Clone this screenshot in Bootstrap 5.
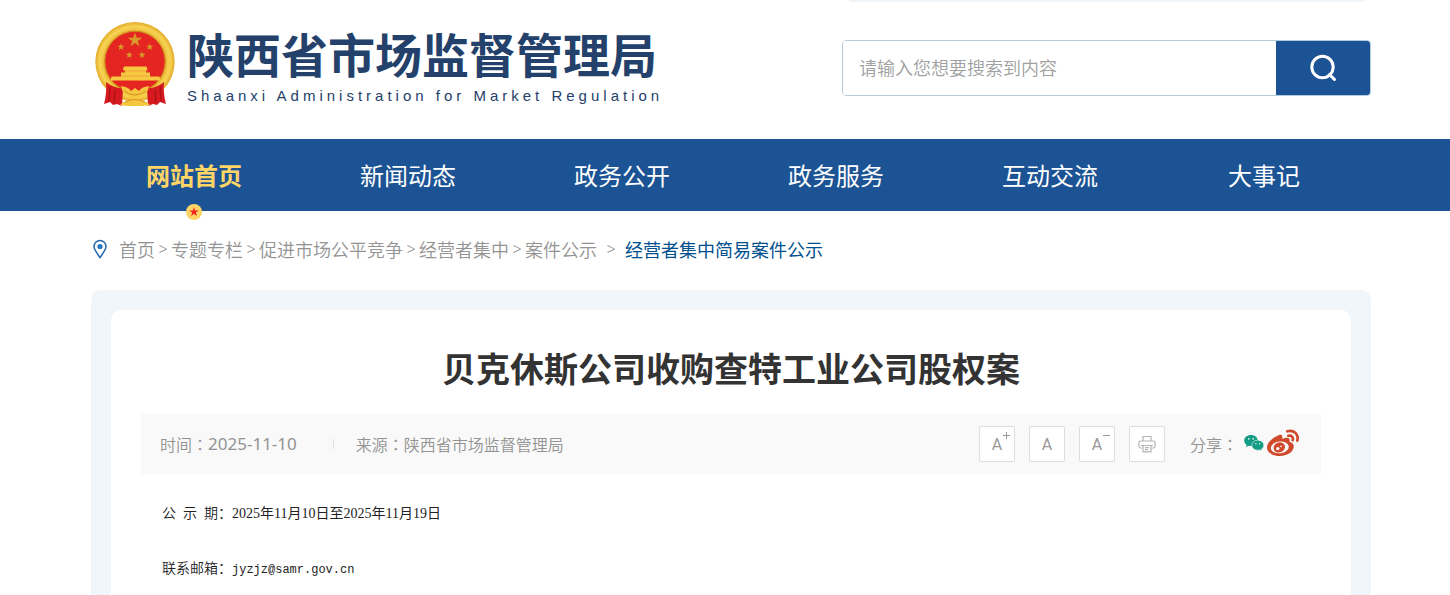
<!DOCTYPE html>
<html lang="zh-CN">
<head>
<meta charset="utf-8">
<meta name="viewport" content="width=device-width, initial-scale=1">
<title>贝克休斯公司收购查特工业公司股权案</title>
<link rel="stylesheet" href="https://cdn.jsdelivr.net/npm/bootstrap@5.3.0/dist/css/bootstrap.min.css">
<style>
  body { font-family: "Noto Sans CJK SC", sans-serif; font-weight: 350; color: #333; background: #fff; }
  a { text-decoration: none; }
  .shell { padding-left: 12px; }
  .wrap { width: 100%; max-width: 1280px; margin: 0 auto; }
  .top-strip { width: 516px; height: 2px; margin-right: 6px; background: #f0f5f9; border-radius: 0 0 8px 8px; }
  .masthead { height: 137px; padding-top: 20px; }
  .logo-cn { font-size: 47px; line-height: 46px; font-weight: 700; color: #24416b; }
  .logo-en { font-family: "Liberation Sans", sans-serif; font-weight: 400; font-size: 15px; line-height: 24px; letter-spacing: 4px; color: #24416b; }
  .search-box { width: 529px; height: 56px; margin-top: 18px; border: 1px solid #b4cbde; border-radius: 4px; overflow: hidden; }
  .search-box .form-control { border: 0; font-size: 18px; font-weight: 350; padding: 0 16px 2px; border-radius: 0; }
  .search-box .form-control::placeholder { color: #a0a0a0; }
  .search-box .btn { width: 94px; background: #1c5394; border: 0; border-radius: 0; padding: 0; }
  .main-nav { background: #1c5394; }
  .main-nav .nav { margin-left: -4px; width: calc(100% + 4px); }
  .main-nav .nav-link { font-size: 24px; line-height: 72px; padding: 0; color: #fff; font-weight: 400; }
  .main-nav .nav-link.active { color: #ffd566; font-weight: 700; }
  .nav-star { bottom: -9px; left: 50%; margin-left: -8px; }
  .crumbs { height: 79px; padding-bottom: 3px; font-size: 18px; color: #939393; }
  .crumbs a { color: #939393; }
  .crumbs a.here { color: #00508e; font-weight: 400; }
  .crumbs .sep { width: 16px; text-align: center; font-family: "Noto Sans", sans-serif; font-size: 16px; }
  .crumbs .sep.wide { width: 28px; }
  .panel { background: #f1f6fa; border-radius: 10px 10px 0 0; padding: 20px 20px 0; }
  .article { background: #fff; border-radius: 10px 10px 0 0; padding: 30px 30px 0; }
  .article h1 { font-size: 34px; line-height: 56px; font-weight: 700; margin: 0 0 18px; color: #333; }
  .meta-bar { background: #f9f9f9; min-height: 60px; padding: 0 22px 0 19px; font-size: 16px; line-height: 24px; color: #939393; }
  .meta-bar .date { font-family: "Noto Sans", sans-serif; font-size: 17px; font-weight: 400; }
  .colon { font-family: "Noto Sans CJK TC", sans-serif; }
  .rule { width: 1px; height: 10px; background: #ddd; margin: 0 22px 0 36px; }
  .tool { width: 36px; height: 36px; padding: 0; border: 1px solid #ddd; border-radius: 2px; background: #fff; margin-right: 14px; }
  .tool svg, .share-links svg, .masthead svg, .crumbs svg, .nav-star svg { display: block; }
  .tool-letter { font-family: Roboto, sans-serif; font-size: 16px; line-height: 36px; font-weight: 400; color: #999; }
  .tool-sign { top: 4px; right: 4px; }
  .share { margin-left: 11px; }
  .share-links { margin-left: 6px; padding-bottom: 2px; gap: 3px; }
  .body-text { padding: 24px 21px 0; font-family: "Liberation Serif", "Noto Sans CJK SC", serif; font-size: 14px; line-height: 28px; color: #222; font-weight: 400; }
  .body-text p { margin: 0 0 25px; }
  .body-text .cjk { font-family: "Noto Sans CJK SC", sans-serif; font-weight: 350; }
  .body-text .mono { font-family: "Liberation Mono", monospace; font-size: 12px; color: #222; }
</style>
</head>
<body class="d-flex flex-column min-vh-100">

<header>
  <div class="shell">
    <div class="wrap">
      <div class="top-strip ms-auto"></div>
      <div class="masthead d-flex justify-content-between align-items-start">
        <a href="#" class="d-flex">
          <svg class="ms-1" width="80" height="85" viewBox="4 4 80 85" aria-hidden="true">
            <defs>
              <radialGradient id="gold" cx=".5" cy=".5" r=".5"><stop offset=".75" stop-color="#e2aa28"/><stop offset=".88" stop-color="#f6cd45"/><stop offset="1" stop-color="#e3ad2f"/></radialGradient>
              <path id="star" d="M0-10 2.3-3.1 9.5-3.1 3.7 1.2 5.9 8.1 0 3.8-5.9 8.1-3.7 1.2-9.5-3.1-2.3-3.1z"/>
            </defs>
            <circle cx="44" cy="43.7" r="39.7" fill="url(#gold)"/>
            <circle cx="44" cy="43.7" r="34.5" fill="none" stroke="#f9da63" stroke-width="5" opacity=".4"/>
            <circle cx="44" cy="43.5" r="30.2" fill="#e52521" stroke="#cf8b20" stroke-width="1"/>
            <g fill="#d99a2b">
              <use href="#star" transform="translate(44 22) scale(.76)"/>
              <use href="#star" transform="translate(30 29) scale(.38)"/>
              <use href="#star" transform="translate(58.7 29) scale(.38)"/>
              <use href="#star" transform="translate(38.3 37) scale(.38)"/>
              <use href="#star" transform="translate(51 37) scale(.38)"/>
            </g>
            <path d="M33 48.500h22.500l1 3-1.500 1v2h4v4h9.500l1 4h-50l1-4H30v-4h4v-2l-2-1z" fill="#f7c943"/>
            <path d="M32 53h25M30 58h28" stroke="#e2912f" stroke-width=".6"/>
            <path d="M15 64q9 7 17 6l-1 18-5-2-4 1-3-3-6 2q3-11 2-22zM73 64q-9 7-17 6l1 18 5-2 4 1 3-3 6 2q-3-11-2-22z" fill="#d71920"/>
            <path d="M19 69l-1 14M24 72l-1 13M69 69l1 14M64 72l1 13" stroke="#a90f16" stroke-width="1.200"/>
            <path d="M30 68q8 1 10 5l4-3 4 3q2-4 10-5-1 8-8 9l-2 5 8 2 3 3-7 1H36l-7-1 3-3 8-2-2-5q-7-1-8-9z" fill="#f5c63e"/>
            <path d="M33 73q11 8 22 0M34 84q10-5 20 0" fill="none" stroke="#d39221" stroke-width="1"/>
          </svg>
          <span class="d-flex flex-column ps-2 ms-1">
            <span class="logo-cn pt-2">陕西省市场监督管理局</span>
            <span class="logo-en pt-2">Shaanxi Administration for Market Regulation</span>
          </span>
        </a>
        <form class="search-box d-flex" role="search">
          <input class="form-control shadow-none" type="text" aria-label="搜索" placeholder="请输入您想要搜索到内容">
          <button class="btn flex-shrink-0 d-flex align-items-center justify-content-center" type="button" aria-label="搜索">
            <svg width="30" height="30" viewBox="0 0 30 30" fill="none" stroke="#fff" stroke-width="3" stroke-linecap="round"><circle cx="14.500" cy="14" r="10.700"/><path d="M21.500 21.500l5 5"/></svg>
          </button>
        </form>
      </div>
    </div>
  </div>
  <nav class="main-nav">
    <div class="shell">
      <div class="wrap">
        <ul class="nav nav-fill nav-justified">
          <li class="nav-item position-relative"><a class="nav-link active" href="#">网站首页</a>
            <span class="nav-star position-absolute"><svg width="16" height="16" viewBox="-8 -8 16 16"><circle r="8" fill="#ffd566"/><use href="#star" fill="#f0281e" transform="scale(.5)"/></svg></span></li>
          <li class="nav-item"><a class="nav-link" href="#">新闻动态</a></li>
          <li class="nav-item"><a class="nav-link" href="#">政务公开</a></li>
          <li class="nav-item"><a class="nav-link" href="#">政务服务</a></li>
          <li class="nav-item"><a class="nav-link" href="#">互动交流</a></li>
          <li class="nav-item"><a class="nav-link" href="#">大事记</a></li>
        </ul>
      </div>
    </div>
  </nav>
</header>

<main class="shell flex-grow-1 d-flex flex-column">
  <nav class="wrap crumbs d-flex align-items-center" aria-label="当前位置">
    <svg class="me-2" width="20" height="20" viewBox="0 0 20 20" fill="none"><path d="M9 18.500C5.500 13.500 3 10.500 3 7.500a6 6 0 0 1 12 0c0 3-2.500 6-6 11z" stroke="#2468b0" stroke-width="1.500"/><circle cx="9" cy="7.500" r="2.600" fill="#2176c7"/></svg>
    <a href="#">首页</a><span class="sep">&gt;</span>
    <a href="#">专题专栏</a><span class="sep">&gt;</span>
    <a href="#">促进市场公平竞争</a><span class="sep">&gt;</span>
    <a href="#">经营者集中</a><span class="sep">&gt;</span>
    <a href="#">案件公示</a><span class="sep wide">&gt;</span>
    <a href="#" class="here">经营者集中简易案件公示</a>
  </nav>

  <div class="wrap panel flex-grow-1 d-flex flex-column">
    <article class="article flex-grow-1">
      <h1 class="text-center">贝克休斯公司收购查特工业公司股权案</h1>
      <div class="meta-bar d-flex align-items-center">
        <span>时间<span class="colon" lang="zh-TW">：</span></span><span class="date">2025-11-10</span>
        <span class="rule"></span>
        <span>来源<span class="colon" lang="zh-TW">：</span>陕西省市场监督管理局</span>
        <div class="d-flex align-items-center ms-auto">
          <button type="button" class="tool position-relative" aria-label="放大字号"><span class="tool-letter">A</span><svg class="tool-sign position-absolute" width="8" height="8" viewBox="0 0 8 8" stroke="#999"><path d="M1 4.500h7M4.500 1v7"/></svg></button>
          <button type="button" class="tool" aria-label="默认字号"><span class="tool-letter">A</span></button>
          <button type="button" class="tool position-relative" aria-label="缩小字号"><span class="tool-letter">A</span><svg class="tool-sign position-absolute" width="8" height="8" viewBox="0 0 8 8" stroke="#999"><path d="M1 4.500h7"/></svg></button>
          <button type="button" class="tool d-flex align-items-center justify-content-center" aria-label="打印">
            <svg width="18" height="18" viewBox="0 0 18 18" fill="none" stroke="#b5b5b5" stroke-width="1.200"><path d="M5 6V1.500h8V6M4.500 13H2.500a1.500 1.500 0 0 1-1.500-1.500v-4A1.500 1.500 0 0 1 2.500 6h13A1.500 1.500 0 0 1 17 7.500v4a1.500 1.500 0 0 1-1.500 1.500h-2"/><path d="M5 10.500h8v6.300H5zM3 10.500h12M7 12.700h4M7 14.700h3"/></svg>
          </button>
          <span class="share">分享<span class="colon" lang="zh-TW">：</span></span>
          <div class="share-links d-flex align-items-center">
            <a href="#" aria-label="微信"><svg width="20" height="18" viewBox="0 0 20 18"><path d="M7 1C3.200 1 .2 3.400.2 6.500c0 1.800.9 3.300 2.400 4.300L2 13l2.500-1.200c.8.200 1.600.3 2.500.3 3.900 0 6.800-2.400 6.800-5.500S10.900 1 7 1z" fill="#129b85"/><path d="M13.700 6.200c-3.300 0-5.900 2.200-5.900 5s2.600 5 5.900 5c.7 0 1.400-.1 2.100-.3l2.200 1.200-.6-2c1.500-.9 2.400-2.300 2.400-3.900 0-2.800-2.800-5-6.100-5z" fill="#129b85" stroke="#f9f9f9" stroke-width=".6"/><g fill="#f9f9f9"><circle cx="4.800" cy="4.900" r=".8"/><circle cx="9.200" cy="4.900" r=".8"/><circle cx="11.900" cy="9.800" r=".7"/><circle cx="15.700" cy="9.800" r=".7"/></g></svg></a>
            <a href="#" aria-label="微博"><svg width="32" height="28" viewBox="0 0 32 28"><path d="M11.800 6.200c2.500-1 4.200.1 3.300 3.700 4.500-2 8.800-1.700 7.300 2.900 3.400 1 5 3 4.200 6C25.500 23.500 20 27 13 27 6 27 0 23.800 0 18.500 0 13.500 6.300 8 11.800 6.200z" fill="#d0492d"/><ellipse cx="12.800" cy="18.400" rx="9" ry="5.900" transform="rotate(-7 12.800 18.400)" fill="#f9f9f9"/><ellipse cx="12.300" cy="18.400" rx="5.800" ry="5" transform="rotate(-20 12.300 18.400)" fill="#d0492d"/><circle cx="10.800" cy="19.600" r="1.700" fill="#f9f9f9"/><circle cx="14" cy="17.400" r=".8" fill="#f9f9f9"/><path d="M20.300 2.300C27 .3 32 5.500 30.300 11.500M21.300 6.800c3.300-.9 5.300 1.500 4.400 4.400" fill="none" stroke="#d0492d" stroke-width="2.700" stroke-linecap="round"/></svg></a>
          </div>
        </div>
      </div>
      <div class="body-text">
        <p><span class="cjk">公&ensp;示&ensp;期：</span>2025年11月10日至2025年11月19日</p>
        <p class="mb-0"><span class="cjk">联系邮箱：</span><span class="mono">jyzjz@samr.gov.cn</span></p>
      </div>
    </article>
  </div>
</main>

<script src="https://cdn.jsdelivr.net/npm/bootstrap@5.3.0/dist/js/bootstrap.bundle.min.js"></script>
</body>
</html>
